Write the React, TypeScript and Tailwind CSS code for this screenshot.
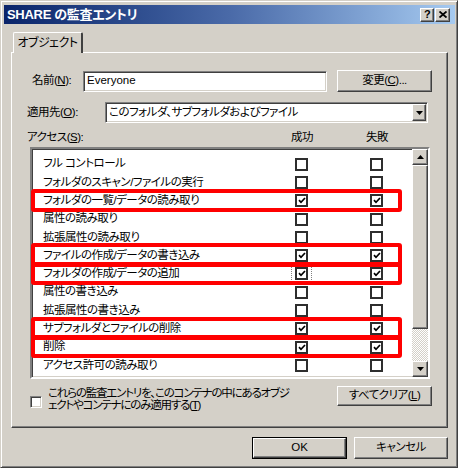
import React from 'react';

// 監査エントリ ダイアログ (Windows クラシック)
const rows = [
  { label: 'フル コントロール', s: false, f: false },
  { label: 'フォルダのスキャン/ファイルの実行', s: false, f: false },
  { label: 'フォルダの一覧/データの読み取り', s: true, f: true, mark: true },
  { label: '属性の読み取り', s: false, f: false },
  { label: '拡張属性の読み取り', s: false, f: false },
  { label: 'ファイルの作成/データの書き込み', s: true, f: true, mark: true },
  { label: 'フォルダの作成/データの追加', s: true, f: true, mark: true, focus: true },
  { label: '属性の書き込み', s: false, f: false },
  { label: '拡張属性の書き込み', s: false, f: false },
  { label: 'サブフォルダとファイルの削除', s: true, f: true, mark: true },
  { label: '削除', s: true, f: true, mark: true },
  { label: 'アクセス許可の読み取り', s: false, f: false },
];

const raised =
  'bg-[#d4d0c8] border border-t-white border-l-white border-r-[#404040] border-b-[#404040] shadow-[inset_-1px_-1px_0_#808080]';
const sunken =
  'bg-white border border-t-[#808080] border-l-[#808080] border-r-white border-b-white shadow-[inset_1px_1px_0_#404040,inset_-1px_-1px_0_#d4d0c8]';

function Check({ checked, focus }: { checked: boolean; focus?: boolean }) {
  return (
    <span
      className={`w-[13px] h-[13px] shrink-0 bg-white border-2 border-[#2e2e2e] flex items-center justify-center ${
        focus ? 'outline-1 outline-dotted outline-[#808080] outline-offset-[3px]' : ''
      }`}
    >
      {checked && (
        <svg width="8" height="7" viewBox="0 0 8 7">
          <path d="M1 3.2 L3 5.3 L7 1" fill="none" stroke="#000" strokeWidth="1.7" />
        </svg>
      )}
    </span>
  );
}

function Arrow({ down }: { down?: boolean }) {
  return (
    <svg width="7" height="4" viewBox="0 0 7 4">
      <path d={down ? 'M0 0 H7 L3.5 4 Z' : 'M0 4 H7 L3.5 0 Z'} fill="#000" />
    </svg>
  );
}

export default function App() {
  return (
    <div className="w-[460px] h-[470px] bg-white">
      <div
        className="w-[458px] h-[468px] bg-[#d4d0c8] border border-t-[#d4d0c8] border-l-[#d4d0c8] border-r-[#404040] border-b-[#404040] shadow-[inset_1px_1px_0_#fff,inset_-1px_-1px_0_#808080] pl-[3px] pr-[2px] pt-[4px] text-[11.5px] tracking-[-0.5px] text-black font-['Liberation_Sans','Noto_Sans_CJK_JP',sans-serif] [font-feature-settings:'palt']"
      >
        {/* タイトルバー */}
        <div className="h-[19px] flex items-center justify-between pl-[3px] pr-[5px] bg-linear-to-r from-[#0a246a] via-[#4a6aa8] to-[#a6caf0]">
          <span className="text-white font-bold text-[13px] tracking-[-0.3px] leading-none">SHARE の監査エントリ</span>
          <div className="flex gap-[1px]">
            <span className={`${raised} w-[14px] h-[14px] flex items-center justify-center text-[11px] font-bold leading-none`}>?</span>
            <span className={`${raised} w-[15px] h-[14px] flex items-center justify-center`}>
              <svg width="8" height="7" viewBox="0 0 8 7">
                <path d="M0.5 0.5 L7.5 6.5 M7.5 0.5 L0.5 6.5" stroke="#000" strokeWidth="1.8" />
              </svg>
            </span>
          </div>
        </div>

        {/* タブ */}
        <div className="mt-[8px] ml-[9px] relative z-10 w-[70px] h-[21px] mb-[-1px] bg-[#d4d0c8] border-t border-l border-t-white border-l-white border-r-2 border-r-[#404040] rounded-t-[2px] flex items-center justify-center text-[12px]">
          <span>オブジェクト</span>
        </div>

        {/* パネル */}
        <div className="ml-[7px] w-[437px] h-[376px] border border-t-white border-l-white border-r-[#404040] border-b-[#404040] shadow-[inset_-1px_-1px_0_#808080]">
          <div className="mt-[17px] flex items-center h-[22px]">
            <span className="ml-[20px] w-[51px]">
              名前(<span className="underline">N</span>):
            </span>
            <div className={`${sunken} w-[244px] h-[21px] bg-[#d4d0c8] flex items-center pl-[3px] tracking-normal`}>Everyone</div>
            <button className={`${raised} ml-[10px] w-[95px] h-[22px] flex items-center justify-center`}>
              変更(<span className="underline">C</span>)...
            </button>
          </div>

          <div className="mt-[10px] flex items-center h-[21px]">
            <span className="ml-[15px] w-[78px]">
              適用先(<span className="underline">O</span>):
            </span>
            <div className={`${sunken} w-[323px] h-[21px] flex items-center justify-between pl-[3px] pr-[1px]`}>
              <span>このフォルダ、サブフォルダおよびファイル</span>
              <span className={`${raised} w-[14px] h-[17px] flex items-center justify-center`}>
                <Arrow down />
              </span>
            </div>
          </div>

          <div className="mt-[7px] flex items-center h-[16px]">
            <span className="ml-[15px] w-[260px]">
              アクセス(<span className="underline">S</span>):
            </span>
            <span className="w-[30px] text-center">成功</span>
            <span className="ml-[45px] w-[30px] text-center">失敗</span>
          </div>

          {/* アクセス一覧 */}
          <div className={`${sunken} mt-[1px] ml-[18px] w-[400px] h-[232px] border-2 flex`}>
            <div className="flex-1 pt-[6px]">
              {rows.map((r) => (
                <div key={r.label} className="relative flex items-center h-[18.3px]">
                  <span className="pl-[11px] w-[263px] whitespace-nowrap leading-none">{r.label}</span>
                  <Check checked={r.s} focus={r.focus} />
                  <span className="w-[62px]" />
                  <Check checked={r.f} />
                  {r.mark && (
                    <div className="absolute left-[-1px] w-[371px] top-[-3px] bottom-[-2px] border-4 border-[#ff0000] rounded-[3px] pointer-events-none z-10" />
                  )}
                </div>
              ))}
            </div>
            <div className="w-[16px] flex flex-col">
              <span className={`${raised} h-[16px] flex items-center justify-center`}>
                <Arrow />
              </span>
              <span className={`${raised} h-[164px]`} />
              <span className="flex-1 bg-[repeating-conic-gradient(#fff_0_25%,#d4d0c8_0_50%)] bg-[length:2px_2px]" />
              <span className={`${raised} h-[16px] flex items-center justify-center`}>
                <Arrow down />
              </span>
            </div>
          </div>

          <div className="mt-[7px] flex items-start">
            <span className={`${sunken} ml-[18px] mt-[10px] w-[12px] h-[12px] shrink-0`} />
            <span className="ml-[6px] w-[283px] leading-[12px] pt-[1px] tracking-[-1.2px] whitespace-nowrap">
              これらの監査エントリを、このコンテナの中にあるオブジ
              <br />
              ェクトやコンテナにのみ適用する(<span className="underline">T</span>)
            </span>
            <button className={`${raised} ml-[6px] w-[95px] h-[20px] flex items-center justify-center`}>
              すべてクリア(<span className="underline">L</span>)
            </button>
          </div>
        </div>

        {/* OK / キャンセル */}
        <div className="mt-[9px] ml-[248px] flex gap-[7px]">
          <button className="w-[95px] h-[22px] border border-black flex">
            <span className={`${raised} flex-1 flex items-center justify-center tracking-normal`}>OK</span>
          </button>
          <button className={`${raised} w-[94px] h-[22px] flex items-center justify-center`}>キャンセル</button>
        </div>
      </div>
    </div>
  );
}
